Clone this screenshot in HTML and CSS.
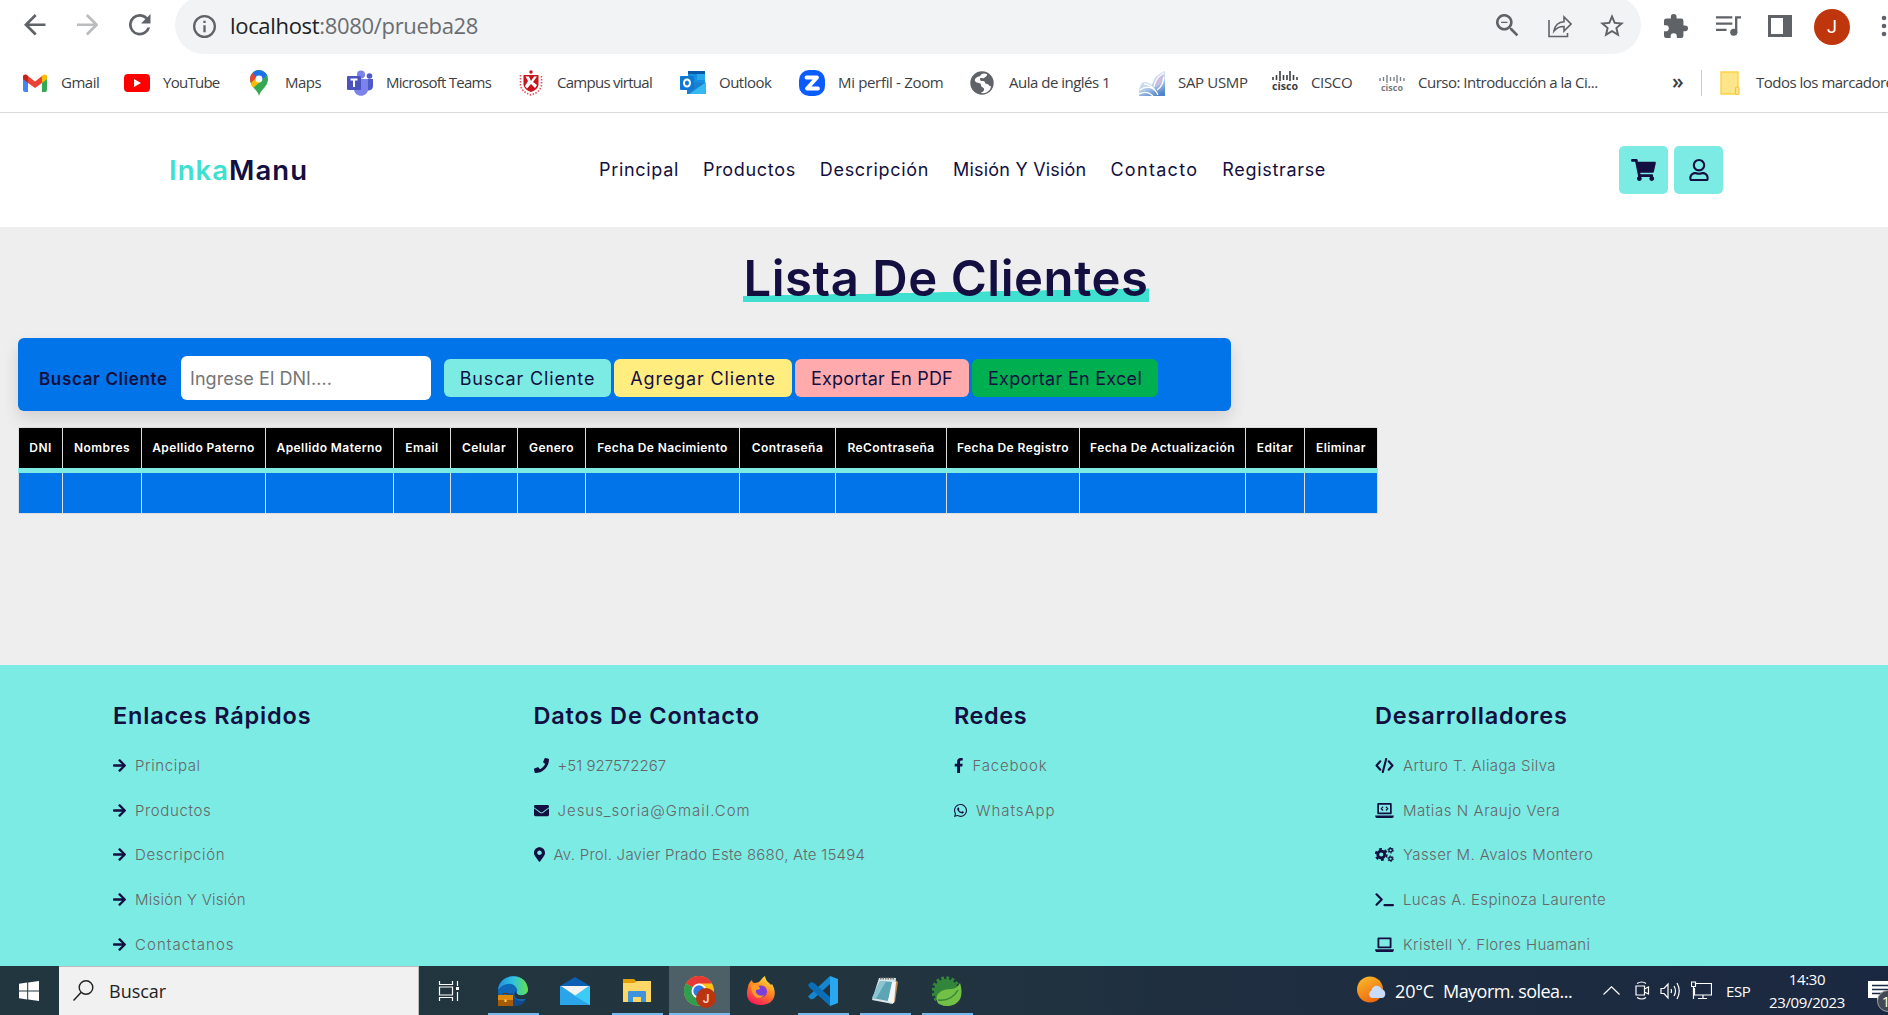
FILE: index.html
```html
<!DOCTYPE html>
<html lang="es">
<head>
<meta charset="utf-8">
<title>InkaManu - Lista de clientes</title>
<link rel="stylesheet" href="styles.css">
</head>
<body>
<svg class="sprite" aria-hidden="true">
  <symbol id="arrow" viewBox="0 0 448 512"><path d="M190.5 66.9l22.2-22.2c9.4-9.4 24.6-9.4 33.9 0L441 239c9.4 9.4 9.4 24.6 0 33.9L246.6 467.3c-9.4 9.4-24.6 9.4-33.9 0l-22.2-22.2c-9.5-9.5-9.3-25 .4-34.3L311.4 296H24c-13.3 0-24-10.7-24-24v-32c0-13.3 10.7-24 24-24h287.4L190.9 101.2c-9.8-9.3-10-24.8-.4-34.3z"/></symbol>
</svg>

<div class="browser">
  <div class="toolbar">
    <div class="nav-buttons">
      <svg viewBox="4 4 16 16"><path d="M20 11H7.83l5.59-5.59L12 4l-8 8 8 8 1.41-1.41L7.83 13H20z"/></svg>
      <svg class="off" viewBox="4 4 16 16"><path d="M12 4l-1.41 1.41L16.17 11H4v2h12.17l-5.58 5.59L12 20l8-8z"/></svg>
      <svg viewBox="4 4 16 16"><path d="M17.65 6.35A7.96 7.96 0 0 0 12 4a8 8 0 1 0 7.73 10h-2.08A6 6 0 1 1 12 6c1.66 0 3.14.69 4.22 1.78L13 11h7V4z"/></svg>
    </div>
    <div class="omnibox">
      <svg class="info" viewBox="2 2 20 20"><path d="M11 17h2v-6h-2zm1-15a10 10 0 1 0 0 20 10 10 0 0 0 0-20zm0 18a8 8 0 1 1 0-16 8 8 0 0 1 0 16zM11 9h2V7h-2z"/></svg>
      <span class="url"><b>localhost</b>:8080/prueba28</span>
      <div class="omni-actions">
        <svg viewBox="3 3 18 18"><path d="M15.5 14h-.79l-.28-.27A6.5 6.5 0 1 0 13.73 14.43l.27.28v.79l5 4.99L20.49 19zm-6 0a4.5 4.5 0 1 1 0-9 4.5 4.5 0 0 1 0 9zM7 9h5v1H7z"/></svg>
        <svg class="share" viewBox="0 0 24 24"><path d="M1 6v16.5h18.500V19M6 17c1-6 4-9 10-9.300V3l7 7-7 7v-4.500c-5-.2-7.500 1.500-10 4.500z" fill="none" stroke="#5f6368" stroke-width="1.600"/></svg>
        <svg viewBox="2 2 20 20"><path d="M22 9.24l-7.190-.62L12 2 9.190 8.630 2 9.240l5.460 4.730L5.820 21 12 17.270 18.180 21l-1.630-7.030zM12 15.400l-3.760 2.270 1-4.280-3.320-2.880 4.380-.38L12 6.100l1.710 4.040 4.380.38-3.320 2.880 1 4.280z"/></svg>
      </div>
    </div>
    <div class="chrome-actions">
      <svg viewBox="2 1 21 21"><path d="M20.500 11H19V7a2 2 0 0 0-2-2h-4V3.500a2.500 2.500 0 0 0-5 0V5H4a2 2 0 0 0-2 2v3.800h1.500a2.700 2.700 0 0 1 0 5.400H2V20a2 2 0 0 0 2 2h3.800v-1.500a2.700 2.700 0 0 1 5.400 0V22H17a2 2 0 0 0 2-2v-4h1.500a2.500 2.500 0 0 0 0-5z"/></svg>
      <svg class="playlist" viewBox="0 0 27 22"><path d="M1 2h17M1 8.500h17M1 15h11M22 18V2h5" fill="none" stroke="#5f6368" stroke-width="2.400"/><circle cx="19.500" cy="17.500" r="3.700"/></svg>
      <svg viewBox="0 0 24 24"><path d="M0 1h24v22H0zm3 3v16h12V4z" fill-rule="evenodd"/></svg>
      <span class="avatar">J</span>
      <svg class="dots" viewBox="0 0 6 22"><circle cx="3" cy="3" r="2.300"/><circle cx="3" cy="11" r="2.300"/><circle cx="3" cy="19" r="2.300"/></svg>
    </div>
  </div>

  <div class="bookmarks">
    <ul>
      <li><svg viewBox="0 0 26 26"><path d="M1 7v13q0 2 2 2h3V11z" fill="#4285f4"/><path d="M25 7v13q0 2-2 2h-3V11z" fill="#34a853"/><path d="M6 6l7 5.500L20 6v7l-7 5-7-5z" fill="#ea4335"/><path d="M1 7c0-3 3-3 5-1v7l-5-4z" fill="#c5221f"/><path d="M25 7c0-3-3-3-5-1v7l5-4z" fill="#fbbc04"/></svg><span>Gmail</span></li>
      <li><svg viewBox="0 0 26 26"><rect y="4" width="26" height="18" rx="4" fill="#f00"/><path d="M10 9l7 4-7 4z" fill="#fff"/></svg><span class="t7">YouTube</span></li>
      <li><svg viewBox="0 0 26 26"><path d="M13 26c-1-6-9-9-9-17a9 9 0 0 1 18 0c0 8-8 11-9 17z" fill="#34a853"/><path d="M4.500 12C3.500 8 4.500 5 6.500 3L13 9l-6 7z" fill="#ea4335"/><path d="M6.500 3C10-1 18-1 21 5l-8 8-3-6z" fill="#1a73e8"/><path d="M5 13l5-5 4 4-7 6z" fill="#fbbc04"/><circle cx="13" cy="9" r="3.400" fill="#fff"/></svg><span>Maps</span></li>
      <li><svg viewBox="0 0 26 26"><circle cx="14" cy="4.500" r="4" fill="#7b83eb"/><circle cx="22.500" cy="6" r="2.800" fill="#5059c9"/><path d="M17 9h9v7c0 6-9 6-9 0z" fill="#5059c9"/><path d="M7 9h14v10c0 9-14 9-14 0z" fill="#7b83eb"/><rect y="6" width="14" height="14" rx="1" fill="#4b53bc"/><path d="M3.500 9.500h7M7 9.500v7.500" stroke="#fff" stroke-width="2"/></svg><span class="t7">Microsoft Teams</span></li>
      <li><svg viewBox="0 0 26 26"><path d="M2.500 5v10q1 7 10.500 10 9.500-3 10.500-10V5" fill="none" stroke="#d9555a" stroke-width="1.600" stroke-dasharray="1.500 1.500"/><circle cx="13" cy="2" r="1.700" fill="#c4161c"/><path d="M5.500 5h15v10q-1 5-7.500 7-6.500-2-7.500-7z" fill="#c4161c"/><path d="M7.500 6.500h3.500l2 4.500 3-4.500h3l-4 5.500 4 3-2 3-4-4-4 4.500-2-2.500 3-5z" fill="#fff"/></svg><span class="t7">Campus virtual</span></li>
      <li><svg viewBox="0 0 26 26"><path d="M8 1h17v12H8z" fill="#1490df"/><path d="M8 1h17v3H8z" fill="#0a5aa8"/><path d="M17 4h8v6h-8z" fill="#28a8ea"/><path d="M7 12l19 1v11H7z" fill="#1a7fd0"/><path d="M26 12v12H9z" fill="#35b8f1"/><rect y="6" width="14" height="14" rx="1" fill="#0f78d4"/><ellipse cx="7" cy="13" rx="3" ry="3.600" fill="none" stroke="#fff" stroke-width="2"/></svg><span>Outlook</span></li>
      <li><svg viewBox="0 0 26 26"><rect width="26" height="26" rx="10" fill="#0b5cff"/><path d="M7.500 7.500h10.500L8 18.500h11" fill="none" stroke="#fff" stroke-width="3.800" stroke-linejoin="round" stroke-linecap="round"/></svg><span class="t3">Mi perfil - Zoom</span></li>
      <li><svg viewBox="0 0 26 26"><circle cx="12" cy="13" r="11.700" fill="#5f6368"/><path d="M14 3.500c-4 0-3 3-5 3S4 9 5 11c2 3 6 1 6 4s4 2 3 5-3 2-3 3c7 1 10-4 10-7-2 1-2-2-4-2-3 0-1-3-4-3-2 0-3 0-3-2s3 0 4-1 3-1 3-4z" fill="#fff"/></svg><span>Aula de inglés 1</span></li>
      <li><svg viewBox="0 0 26 26"><defs><linearGradient id="sap" x1=".2" y1="0" x2=".7" y2="1"><stop stop-color="#f3f5fb"/><stop offset=".55" stop-color="#bcd3ee"/><stop offset="1" stop-color="#4f83c9"/></linearGradient></defs><path d="M0 26C0 19 1 13 5 12 9 12 11 14 13 15 15 7 20 3 26 1v25z" fill="url(#sap)"/><path d="M24 3c-7 4-8 9-7 14 5-3 8-8 7-14z" fill="#cdbde3"/><path d="M1 20c7-6 15-2 18 5M5 14c8 0 11 6 13 9M15 17C16 8 22 5 25 3M18 20c5-3 6-8 7-13M0 24c6-3 10-2 14 2" fill="none" stroke="#fff" stroke-width="1.300"/></svg><span class="t3">SAP USMP</span></li>
      <li><svg viewBox="0 0 26 26"><path d="M1 7v3M4.500 5v5M8 1v10M11.500 5v5M15 5v5M18 1v10M21.500 5v5M25 7v3" stroke="#3c4043" stroke-width="1.600"/><text x="0" y="19.500" class="cisco" textLength="26" lengthAdjust="spacingAndGlyphs">cisco</text></svg><span class="t3">CISCO</span></li>
      <li><svg viewBox="0 0 26 26"><path d="M1 8v3M4.500 7v4M8 5v8M11.500 7v4M15 7v4M18 5v8M21.500 7v4M25 8v3" stroke="#777c80" stroke-width="1.300"/><text x="2" y="20.500" class="cisco small" textLength="22" lengthAdjust="spacingAndGlyphs">cisco</text></svg><span>Curso: Introducción a la Ci...</span></li>
    </ul>
    <span class="more">»</span>
    <div class="all-marks">
      <svg viewBox="0 0 20 25"><path d="M1 1h17v22H1z" fill="#ffe58a" stroke="#fbd446" stroke-width="1.400"/><rect x="15.500" y="16" width="3.500" height="7.500" rx="1" fill="#ffe58a" stroke="#f1c232"/></svg>
      <span>Todos los marcadores</span>
    </div>
  </div>
</div>

<header class="header">
  <a class="logo"><span>Inka</span>Manu</a>
  <nav>
    <a>Principal</a><a>Productos</a><a>Descripción</a><a class="narrow">Misión Y Visión</a><a class="wide">Contacto</a><a>Registrarse</a>
  </nav>
  <div class="icons">
    <a><svg width="25" height="22" viewBox="0 0 576 512"><path d="M528.120 301.319l47.273-208C578.806 78.301 567.391 64 551.990 64H159.208l-9.166-44.810C147.758 8.021 137.930 0 126.529 0H24C10.745 0 0 10.745 0 24v16c0 13.255 10.745 24 24 24h69.883l70.248 343.435C147.325 417.100 136 435.222 136 456c0 30.928 25.072 56 56 56s56-25.072 56-56c0-15.674-6.447-29.835-16.824-40h209.647C430.447 426.165 424 440.326 424 456c0 30.928 25.072 56 56 56s56-25.072 56-56c0-22.172-12.888-41.332-31.579-50.405l5.517-24.276c3.413-15.018-8.002-29.319-23.403-29.319H218.117l-6.545-32h293.145c11.206 0 20.920-7.754 23.403-18.681z"/></svg></a>
    <a><svg width="20" height="22" viewBox="0 0 448 512"><path d="M313.600 304c-28.700 0-42.500 16-89.600 16-47.100 0-60.800-16-89.600-16C60.200 304 0 364.200 0 438.400V464c0 26.500 21.500 48 48 48h352c26.500 0 48-21.500 48-48v-25.600c0-74.200-60.200-134.400-134.400-134.400zM400 464H48v-25.600c0-47.600 38.800-86.400 86.400-86.400 14.600 0 38.300 16 89.600 16 51.700 0 74.900-16 89.600-16 47.600 0 86.400 38.800 86.400 86.400V464zM224 288c79.500 0 144-64.500 144-144S303.500 0 224 0 80 64.500 80 144s64.500 144 144 144zm0-240c52.900 0 96 43.100 96 96s-43.100 96-96 96-96-43.100-96-96 43.100-96 96-96z"/></svg></a>
  </div>
</header>

<main>
  <h1><span>Lista De Clientes</span></h1>
  <form class="search">
    <label for="dni">Buscar Cliente</label>
    <input id="dni" type="text" placeholder="Ingrese El DNI....">
    <button type="button" class="btn find">Buscar Cliente</button>
    <button type="button" class="btn add">Agregar Cliente</button>
    <button type="button" class="btn pdf">Exportar En PDF</button>
    <button type="button" class="btn excel">Exportar En Excel</button>
  </form>
  <table>
    <thead><tr><th>DNI</th><th>Nombres</th><th>Apellido Paterno</th><th>Apellido Materno</th><th>Email</th><th>Celular</th><th>Genero</th><th>Fecha De Nacimiento</th><th>Contraseña</th><th>ReContraseña</th><th>Fecha De Registro</th><th>Fecha De Actualización</th><th>Editar</th><th>Eliminar</th></tr></thead>
    <tbody><tr><td></td><td></td><td></td><td></td><td></td><td></td><td></td><td></td><td></td><td></td><td></td><td></td><td></td><td></td></tr></tbody>
  </table>
</main>

<footer>
  <section>
    <h3>Enlaces Rápidos</h3>
    <a><svg class="w13"><use href="#arrow"/></svg>Principal</a>
    <a><svg class="w13"><use href="#arrow"/></svg>Productos</a>
    <a><svg class="w13"><use href="#arrow"/></svg>Descripción</a>
    <a class="narrow"><svg class="w13"><use href="#arrow"/></svg>Misión Y Visión</a>
    <a class="wide"><svg class="w13"><use href="#arrow"/></svg>Contactanos</a>
  </section>
  <section>
    <h3>Datos De Contacto</h3>
    <a class="digits"><svg class="w15" viewBox="0 0 512 512"><path d="M493.400 24.600l-104-24c-11.300-2.600-22.900 3.300-27.500 13.900l-48 112c-4.200 9.800-1.400 21.300 6.900 28l60.600 49.600c-36 76.700-98.900 140.500-177.200 177.200l-49.600-60.600c-6.800-8.300-18.200-11.100-28-6.900l-112 48C3.900 366.500-2 378.100.6 389.400l24 104C27.100 504.200 36.700 512 48 512c256.100 0 464-207.500 464-464 0-11.200-7.700-20.900-18.600-23.400z"/></svg>+51 927572267</a>
    <a class="wide"><svg class="w15" viewBox="0 0 512 512"><path d="M502.300 190.800c3.900-3.100 9.700-.2 9.700 4.700V400c0 26.500-21.500 48-48 48H48c-26.500 0-48-21.500-48-48V195.600c0-5 5.700-7.800 9.700-4.700 22.400 17.400 52.100 39.500 154.100 113.600 21.100 15.400 56.700 47.800 92.200 47.600 35.700.3 72-32.800 92.300-47.600 102-74.100 131.600-96.300 154-113.700zM256 320c23.200.4 56.600-29.200 73.400-41.400 132.700-96.300 142.800-104.700 173.400-128.700 5.800-4.500 9.200-11.500 9.200-18.900v-19c0-26.500-21.500-48-48-48H48c-26.500 0-48 21.500-48 48v19c0 7.400 3.400 14.300 9.200 18.900 30.600 23.900 40.700 32.400 173.400 128.700 16.800 12.200 50.200 41.800 73.400 41.400z"/></svg>Jesus_soria@Gmail.Com</a>
    <a class="narrow"><svg class="w11" viewBox="0 0 384 512"><path d="M172.268 501.670C26.970 291.031 0 269.413 0 192 0 85.961 85.961 0 192 0s192 85.961 192 192c0 77.413-26.970 99.031-172.268 309.670-9.535 13.774-29.930 13.773-39.464 0zM192 272c44.183 0 80-35.817 80-80s-35.817-80-80-80-80 35.817-80 80 35.817 80 80 80z"/></svg>Av. Prol. Javier Prado Este 8680, Ate 15494</a>
  </section>
  <section>
    <h3 class="short">Redes</h3>
    <a class="mid"><svg class="w9" viewBox="0 0 320 512"><path d="M279.140 288l14.220-92.660h-88.910v-60.130c0-25.350 12.420-50.060 52.240-50.060h40.420V6.260S260.430 0 225.360 0c-73.220 0-121.080 44.380-121.080 124.720v70.620H22.890V288h81.390v224h100.170V288z"/></svg>Facebook</a>
    <a class="wide"><svg class="w13" viewBox="0 0 448 512"><path d="M380.900 97.100C339 55.100 283.200 32 223.900 32c-122.400 0-222 99.600-222 222 0 39.100 10.200 77.300 29.600 111L0 480l117.700-30.900c32.400 17.700 68.900 27 106.100 27h.1c122.300 0 224.100-99.600 224.100-222 0-59.300-25.200-115-67.100-157zm-157 341.600c-33.200 0-65.700-8.900-94-25.700l-6.700-4-69.800 18.300L72 359.200l-4.400-7c-18.500-29.400-28.200-63.300-28.200-98.200 0-101.700 82.800-184.500 184.600-184.500 49.300 0 95.600 19.200 130.400 54.100 34.800 34.900 56.200 81.200 56.100 130.500 0 101.800-84.900 184.600-186.600 184.600zm101.200-138.200c-5.500-2.800-32.800-16.200-37.900-18-5.100-1.900-8.800-2.800-12.500 2.800-3.700 5.600-14.300 18-17.600 21.800-3.200 3.700-6.500 4.200-12 1.400-32.600-16.300-54-29.100-75.500-66-5.700-9.800 5.700-9.100 16.300-30.300 1.800-3.700.9-6.900-.5-9.700-1.400-2.800-12.500-30.100-17.100-41.200-4.500-10.800-9.100-9.300-12.500-9.500-3.200-.2-6.900-.2-10.600-.2-3.700 0-9.700 1.400-14.800 6.900-5.100 5.600-19.400 19-19.400 46.300 0 27.300 19.900 53.700 22.600 57.400 2.800 3.700 39.100 59.700 94.800 83.800 35.200 15.200 49 16.500 66.600 13.900 10.700-1.600 32.800-13.400 37.400-26.400 4.600-13 4.600-24.100 3.200-26.400-1.300-2.500-5-3.900-10.500-6.600z"/></svg>WhatsApp</a>
  </section>
  <section class="devs">
    <h3>Desarrolladores</h3>
    <a><svg class="w18" viewBox="0 0 20 16"><path d="M5.500 3.500L1.500 8l4 4.500M14.500 3.500l4 4.500-4 4.500M11.800 1L8.200 15" fill="none" stroke="#130f40" stroke-width="2.200" stroke-linecap="round" stroke-linejoin="round"/></svg>Arturo T. Aliaga Silva</a>
    <a class="loose"><svg class="w18" viewBox="0 0 20 16"><path d="M3.200 11V1h13.600v10z" fill="none" stroke="#130f40" stroke-width="1.800" stroke-linejoin="round"/><path d="M0 13.200h20q0 2.800-2 2.800H2q-2 0-2-2.800z"/><path d="M8.500 4L6.500 6l2 2M11.500 4l2 2-2 2" fill="none" stroke="#130f40" stroke-width="1.200"/></svg>Matias N Araujo Vera</a>
    <a><svg class="w18" viewBox="0 0 20 16"><circle cx="6.500" cy="8" r="5.900" fill="none" stroke="#130f40" stroke-width="2" stroke-dasharray="3.100 3.080"/><circle cx="6.500" cy="8" r="3.700" fill="none" stroke="#130f40" stroke-width="3"/><circle cx="16.500" cy="3.500" r="1.900" fill="none" stroke="#130f40" stroke-width="1.500"/><circle cx="16.500" cy="3.500" r="3" fill="none" stroke="#130f40" stroke-width="1" stroke-dasharray="1.570 1.570"/><circle cx="16.500" cy="12.500" r="1.900" fill="none" stroke="#130f40" stroke-width="1.500"/><circle cx="16.500" cy="12.500" r="3" fill="none" stroke="#130f40" stroke-width="1" stroke-dasharray="1.570 1.570"/></svg>Yasser M. Avalos Montero</a>
    <a><svg class="w18" viewBox="0 0 20 16"><path d="M1.500 2.500L7 8l-5.500 5.500M10 14h9" fill="none" stroke="#130f40" stroke-width="2.300" stroke-linecap="round" stroke-linejoin="round"/></svg>Lucas A. Espinoza Laurente</a>
    <a><svg class="w18" viewBox="0 0 20 16"><path d="M3.500 11V1.500h13V11z" fill="none" stroke="#130f40" stroke-width="2" stroke-linejoin="round"/><path d="M0 13h20q0 3-2 3H2q-2 0-2-3z"/></svg>Kristell Y. Flores Huamani</a>
  </section>
</footer>

<div class="taskbar">
  <div class="start"><svg width="20" height="20" viewBox="0 0 20 20"><path d="M0 2.800l8.200-1.200v7.900H0zM9.200 1.500L20 0v9.500H9.200zM0 10.500h8.200v7.900L0 17.200zM9.200 10.500H20V20L9.200 18.500z" fill="#fff"/></svg></div>
  <div class="finder"><svg width="21" height="21" viewBox="0 0 21 21"><circle cx="13" cy="7.500" r="6.800" fill="none" stroke="#222" stroke-width="1.400"/><path d="M8 12.500L.5 20.500" stroke="#222" stroke-width="1.500"/></svg><span>Buscar</span></div>
  <div class="view"><svg width="22" height="20" viewBox="0 0 22 20"><path d="M1.500 0v3.500h13V0M1.500 20v-3.500h13V20M1.500 6h13v8h-13zM19.500 0v5M19.500 11v9"/><rect x="18" y="6" width="3" height="3" fill="#fff" stroke="none"/></svg></div>
  <div class="apps">
    <span class="open"><svg viewBox="0 0 30 30"><defs><linearGradient id="edge" x2="1"><stop stop-color="#1e90e0"/><stop offset=".5" stop-color="#2fc2df"/><stop offset="1" stop-color="#63e24a"/></linearGradient></defs><circle cx="15" cy="15" r="15" fill="#0f67b8"/><path d="M0 14C1-3 28-5 30 13c0 7-8 8-11 5-1-1 1-3 0-5-3-7-13-7-19 1z" fill="url(#edge)"/><path d="M15 17c0 8 8 9 13 7-5 8-14 7-17 3-4-5-1-10 4-10z" fill="#114a8c"/><path d="M30 16v7H20c-5-2-4-6-2-8 0 5 8 6 12 1z" fill="#21363f"/><rect y="19" width="15" height="11" fill="#e08a0b"/><rect y="24" width="15" height="6" fill="#a85b06"/><path d="M5 19v-1.500h5V19" fill="none" stroke="#623906"/><rect x="6.500" y="23.500" width="2" height="2.500" fill="#ffd75a"/></svg></span>
    <span><svg viewBox="0 0 30 30"><path d="M0 10L15 1l15 9v4H0z" fill="#0a5fb4"/><path d="M0 10v19h30V10z" fill="#2aa5ea"/><path d="M30 10v19L14 19.500z" fill="#3ccbf4"/><path d="M1 10h28L15 19.500z" fill="#f3f3f3"/></svg></span>
    <span class="open"><svg viewBox="0 0 30 30"><path d="M1 3h11l3 3v3H1z" fill="#e0a000"/><path d="M1 7h11l3-2h14v21H1z" fill="#ffd766"/><path d="M6 26V16q0-1 1-1h16q1 0 1 1v10h-5v-5h-8v5z" fill="#3f93da"/></svg></span>
    <span class="open active"><svg class="chrome" viewBox="0 0 32 32"><circle cx="15" cy="15" r="15" fill="#fbc116"/><path d="M15 15L2 7.500A15 15 0 0 1 28 7.500H15z" fill="#e53935"/><path d="M2 7.500A15 15 0 0 0 15 30l6.500-11L15 15z" fill="#2f9e4f"/><circle cx="15" cy="15" r="7.500" fill="#fff"/><circle cx="15" cy="15" r="5.700" fill="#2f78e8"/><circle cx="22" cy="22" r="10" fill="#b9340f"/><text x="22" y="26.500" text-anchor="middle" class="badge">J</text></svg></span>
    <span><svg viewBox="0 0 30 30"><defs><linearGradient id="fox" x1=".8" x2=".3" y2="1"><stop stop-color="#fff04a"/><stop offset=".45" stop-color="#ff8a1d"/><stop offset="1" stop-color="#f6175c"/></linearGradient></defs><path d="M2 11c0-3 2-5 4-7 0 2 1 3 3 3 2 0 3-1 4-1 2-2 3-4 6-6 1 6 4 6 6 9l1-1c6 10 2 21-11 21S-1 21 2 11z" fill="url(#fox)"/><circle cx="15" cy="15.500" r="6" fill="#7b3ddb"/><path d="M5 9c5-1 9 1 9 4l-4 1c-1 4 4 7 8 5-4 6-13 3-13-10z" fill="#ff9b26"/></svg></span>
    <span class="open"><svg viewBox="0 0 30 30"><path d="M22 0L2 18.500l-2 2 3 3 3-1L22 8z" fill="#1687cf"/><path d="M0 9l3-3 3 1 16 14v9L2 12z" fill="#0a6fb8"/><path d="M22 0l8 3v24l-8 3z" fill="#28a8f2"/></svg></span>
    <span class="open"><svg viewBox="0 0 30 30"><path d="M24 3l4 3-3 20-5 2z" fill="#b98a50"/><path d="M9 2h17l-3 26-21-4z" fill="#d9e6ea"/><path d="M10 5l13 1-5 19L2 22z" fill="#5ba5b5"/><path d="M10 5l6 .5L6 22.800 2 22z" fill="#8ac5d0"/><path d="M22 6l4 0-2 21-6-2z" fill="#f5f5f5"/><path d="M10 2.500h15" stroke="#777" stroke-width="2" stroke-dasharray="1.500 1"/></svg></span>
    <span class="open"><svg viewBox="0 0 30 30"><circle cx="14" cy="15" r="13" fill="none" stroke="#32863a" stroke-width="3.500" stroke-dasharray="2.900 2.200"/><circle cx="14" cy="15" r="12" fill="#32863a"/><path d="M28 7c2 6 2 12 0 16-4 8-16 9-22 4C1 18 10 13 19 13c5 0 7-3 9-6z" fill="#73c046"/><path d="M6 24c9 1 16-3 20-10" fill="none" stroke="#32863a" stroke-width="1.500"/></svg></span>
  </div>
  <div class="weather"><svg width="29" height="28" viewBox="0 0 29 28"><defs><linearGradient id="sun" x2=".5" y2="1"><stop stop-color="#f9bf2c"/><stop offset="1" stop-color="#ee6a10"/></linearGradient></defs><circle cx="13" cy="13.500" r="13" fill="url(#sun)"/><path d="M15 22a4 4 0 0 1-.5-7.500c1-6 8.500-6 10-1.500 5 1 5 9 0 9z" fill="#c9dbfa"/></svg><span class="deg">20°C</span><span class="sky">Mayorm. solea...</span></div>
  <div class="tray">
    <svg width="17" height="9" viewBox="0 0 17 9"><path d="M.5 8.500l8-7.700 8 7.700"/></svg>
    <svg width="15" height="19" viewBox="0 0 15 19"><path d="M2 2.500q5-3 9 0M2 16.500q5 3 9 0M1 5h8.500v9H1zM9.500 8l4-2v7l-4-2z"/></svg>
    <svg width="21" height="18" viewBox="0 0 21 18"><path d="M1 6.500h3l4-4.500v14l-4-4.500H1zM11 7q1 2 0 4M14 4q3 5 0 10M17 1q4.500 8 0 16"/></svg>
    <svg width="21" height="19" viewBox="0 0 21 19"><path d="M5 2.500h15.500v11.500H3.500V7M12 14v3.500M7 17.500h9M.5 1h4v4.500h-4zM2.500 5.500V18"/></svg>
    <span class="lang">ESP</span>
  </div>
  <div class="clock"><span>14:30</span><span class="date">23/09/2023</span></div>
  <div class="notes"><svg width="30" height="32" viewBox="0 0 30 32"><path d="M0 0h26v17H12l-3 3v-3H0z" fill="#fff"/><path d="M4 4.500h16M4 8.500h16M4 12.500h16" stroke="#1b2841" stroke-width="1.400"/><circle cx="20" cy="20" r="10.500" fill="#444a52" stroke="#9a9fa5"/><text x="18" y="25.500" text-anchor="middle" class="count">1</text></svg></div>
</div>
</body>
</html>
```
FILE: styles.css
```css
* { box-sizing: border-box; }
body {
  margin: 0;
  width: 1888px;
  height: 1015px;
  overflow: hidden;
  display: flex;
  flex-direction: column;
  background: #eee;
  color: #130f40;
  font-family: Inter, sans-serif;
}
svg { display: block; flex: none; fill: currentColor; }
.sprite { width: 0; height: 0; position: absolute; }
a { color: inherit; text-decoration: none; }

/* Browser chrome */
.browser {
  height: 113px;
  flex: none;
  overflow: hidden;
  background: #fff;
  border-bottom: 1px solid #d9dadb;
  color: #5f6368;
  font-family: "Open Sans", sans-serif;
}
.toolbar { height: 54px; display: flex; }
.nav-buttons { width: 175px; padding: 0 0 4px 24px; display: flex; align-items: center; gap: 31px; }
.nav-buttons svg { width: 21.500px; height: 21.500px; }
.nav-buttons .off { color: #babcbe; }
.omnibox {
  width: 1466px;
  height: 58px;
  margin-top: -4px;
  padding: 2px 23px 0 18px;
  border-radius: 29px;
  background: #f1f3f4;
  display: flex;
  align-items: center;
}
.info { width: 23px; height: 23px; margin-right: 14px; }
.url { margin-top: -2px; font-size: 22px; line-height: 30px; letter-spacing: -.32px; color: #696d72; }
.url b { font-weight: 400; color: #202124; }
.omni-actions { margin: 0 -6px 1px auto; display: flex; gap: 28px; }
.omni-actions svg { width: 24px; height: 24px; }
.omni-actions svg:first-child { width: 23px; height: 23px; margin-right: 1px; }
.chrome-actions { padding: 0 0 3px 23px; display: flex; align-items: center; gap: 27px; }
.chrome-actions svg { width: 24px; height: 24px; }
.chrome-actions .playlist { width: 26px; height: 22px; }
.chrome-actions .dots { width: 6px; height: 22px; margin-left: 4px; }
.avatar {
  width: 36px; height: 36px;
  margin: 2px 0 0 -5px;
  border-radius: 50%;
  background: #bf360c;
  color: #fff;
  font: 18px/36px Roboto, sans-serif;
  text-align: center;
}
.bookmarks { height: 58px; display: flex; align-items: center; font-size: 15px; letter-spacing: -.5px; color: #3c4043; white-space: nowrap; }
.bookmarks ul {
  width: 1672px;
  flex: none;
  margin: 0;
  padding: 0 0 0 22px;
  list-style: none;
  display: grid;
  grid-template-columns: 102px 122px 101px 171px 162px 119px 171px 169px 133px 107px 1fr;
}
.bookmarks li { display: flex; align-items: center; gap: 13px; }
.bookmarks li svg { width: 26px; height: 26px; }
.bookmarks li span, .all-marks span { margin-top: -2px; }
.bookmarks .t3 { letter-spacing: -.33px; }
.bookmarks .t7 { letter-spacing: -.73px; }
.cisco { font: 700 11px "Open Sans", sans-serif; fill: #3c4043; letter-spacing: 0; }
.cisco.small { font-size: 9px; fill: #777c80; }
.more { width: 29px; flex: none; margin-top: -4px; font-size: 21px; font-weight: 600; line-height: 24px; }
.all-marks { flex: none; height: 26px; padding-left: 18px; border-left: 1px solid #c8cacc; display: flex; align-items: center; gap: 16px; }
.all-marks svg { width: 20px; height: 25px; }

/* Site header */
.header { height: 114px; flex: none; padding: 0 165px 0 169px; background: #fff; display: flex; align-items: center; }
.logo { width: 430px; margin-top: -1px; font-size: 27.500px; font-weight: 600; letter-spacing: 1.050px; }
.logo span { color: #40e0d0; }
nav { margin-top: -2px; display: flex; gap: 24px; font-size: 18px; letter-spacing: .68px; }
nav a.narrow { letter-spacing: .2px; }
nav a.wide { letter-spacing: 1.300px; }
.icons { margin-left: auto; display: flex; gap: 6px; }
.icons a { width: 49px; height: 48px; border-radius: 5px; background: #7cebe4; display: flex; align-items: center; justify-content: center; }

/* Client list */
main { height: 438px; flex: none; padding-left: 18px; }
h1 { width: 1856px; height: 111px; margin: 0; padding-top: 19px; text-align: center; font-size: 49px; line-height: 66px; font-weight: 600; letter-spacing: .56px; }
h1 span {
  display: inline-block;
  height: 56px;
  background: linear-gradient(178.940deg, transparent 49.800px, #40e0d0 50.200px);
}
.search {
  width: 1213px;
  height: 73px;
  padding: 7px 0 0 21px;
  border-radius: 6px;
  background: #0074e8;
  box-shadow: 0 8px 16px rgba(0, 0, 0, .12);
  display: flex;
  align-items: center;
}
.search label { width: 142px; padding-top: 2px; font-size: 17px; font-weight: 600; letter-spacing: .66px; }
.search input {
  width: 250px;
  height: 44px;
  margin: -1px 13px 0 0;
  padding: 1px 9px 0;
  border: 0;
  border-radius: 6px;
  background: #fff;
  font: 18px Inter, sans-serif;
  letter-spacing: .06px;
}
.search input::placeholder { color: #757575; }
.btn { height: 38px; margin: -1px 3px 0 0; padding: 1px 0 0; border: 0; border-radius: 6px; color: #130f40; font: 18px Inter, sans-serif; letter-spacing: .86px; }
.find { width: 167px; background: #7cebe4; }
.add { width: 178px; background: #ffed80; }
.pdf { width: 174px; background: #ffabad; letter-spacing: .18px; }
.excel { width: 186px; background: #00b050; letter-spacing: .28px; }
table { width: 1360px; margin-top: 16px; border-collapse: collapse; table-layout: fixed; font-size: 12px; letter-spacing: .42px; }
th, td { height: 43px; padding: 0; border: 1px solid #ddd; white-space: nowrap; }
th { padding-bottom: 2px; background: #000; border-bottom: 5px solid #7cebe4; color: #fff; font-weight: 600; }
td { background: #0074e8; }
th:nth-child(1) { width: 44px; }
th:nth-child(2) { width: 79px; }
th:nth-child(3) { width: 124px; }
th:nth-child(4) { width: 128px; }
th:nth-child(5) { width: 57px; }
th:nth-child(6) { width: 67px; }
th:nth-child(7) { width: 68px; }
th:nth-child(8) { width: 154px; }
th:nth-child(9) { width: 96px; }
th:nth-child(10) { width: 111px; }
th:nth-child(11) { width: 133px; }
th:nth-child(12) { width: 166px; }
th:nth-child(13) { width: 59px; }
th:nth-child(14) { width: 73px; }

/* Footer */
footer {
  height: 301px;
  flex: none;
  padding: 32px 0 0 113px;
  overflow: hidden;
  background: #7cebe4;
  display: grid;
  grid-template-columns: 420.500px 420.500px 421px 1fr;
}
footer h3 { height: 46px; margin: 0; font-size: 23.500px; line-height: 38px; font-weight: 600; letter-spacing: .82px; }
footer h3.short { letter-spacing: .55px; }
footer section > a { height: 44.800px; display: flex; align-items: center; color: #666; font-size: 15px; font-weight: 300; letter-spacing: .45px; white-space: nowrap; }
footer section:first-child > a { letter-spacing: .62px; }
footer section:first-child > a.wide { letter-spacing: 1.050px; }
footer section > a.digits { letter-spacing: .02px; }
footer section:nth-child(n) > a.narrow { letter-spacing: .25px; }
footer section > a.mid { letter-spacing: .8px; }
footer section > a.wide { letter-spacing: .97px; }
footer .devs > a { letter-spacing: .38px; }
footer .devs > a.loose { letter-spacing: .55px; }
footer a svg { height: 15px; margin-right: 9px; color: #130f40; }
.w9 { width: 9.500px; }
.w11 { width: 11px; }
.w13 { width: 13px; }
.w15 { width: 15px; }
.w18 { width: 19px; }

/* Taskbar */
.taskbar {
  height: 49px;
  flex: none;
  background: linear-gradient(90deg, #21363f 0, #22353f 45%, #1f2f40 62%, #1b2841 100%);
  color: #fff;
  display: flex;
  font-family: "Open Sans", sans-serif;
}
.start { width: 59px; padding: 15px 0 0 19px; }
.finder { width: 360px; padding: 0 0 0 14px; background: #f1f1f1; border: 1px solid #bbb; border-width: 1px 1px 0 0; color: #222; display: flex; align-items: center; gap: 15px; font-size: 18px; }
.finder svg { margin-top: -2px; }
.finder span { margin-top: -1px; }
.view { width: 62px; padding: 15px 0 0 19px; }
.view svg { fill: none; stroke: #fff; stroke-width: 1.200; }
.apps { width: 875px; display: flex; gap: 11px; padding-left: 7px; }
.apps span { width: 51px; display: flex; justify-content: center; padding: 10px 2px 0 0; border-bottom: 2px solid transparent; }
.apps svg { width: 30px; height: 30px; }
.apps .open { border-color: #76b9ed; }
.apps .active { width: 61px; margin: 0 -5px 0 -5px; padding-right: 0; background: #4d6067; }
.apps svg.chrome { width: 32px; height: 32px; }
.badge { font: 600 12px Roboto, sans-serif; fill: #f5d5ca; }
.weather { width: 247px; padding-left: 1px; display: flex; align-items: center; font-size: 18px; }
.weather svg { margin-bottom: 2px; }
.weather span { padding-top: 1px; }
.deg { width: 48px; margin-left: 9px; letter-spacing: -.16px; }
.sky { letter-spacing: -.54px; }
.tray { width: 166px; display: flex; align-items: center; font-size: 15px; }
.tray svg { fill: none; stroke: #fff; stroke-width: 1.200; margin-right: 10px; }
.tray svg:first-child { margin-right: 15px; }
.lang { margin: 1px 0 0 4px; letter-spacing: -.35px; }
.clock { width: 76px; padding-top: 2px; display: flex; flex-direction: column; align-items: center; font-size: 15px; line-height: 23px; letter-spacing: -.35px; }
.notes { margin-left: 23px; padding-top: 15px; width: 20px; overflow: hidden; }
.count { font: 15px "Open Sans", sans-serif; fill: #fff; }
```
